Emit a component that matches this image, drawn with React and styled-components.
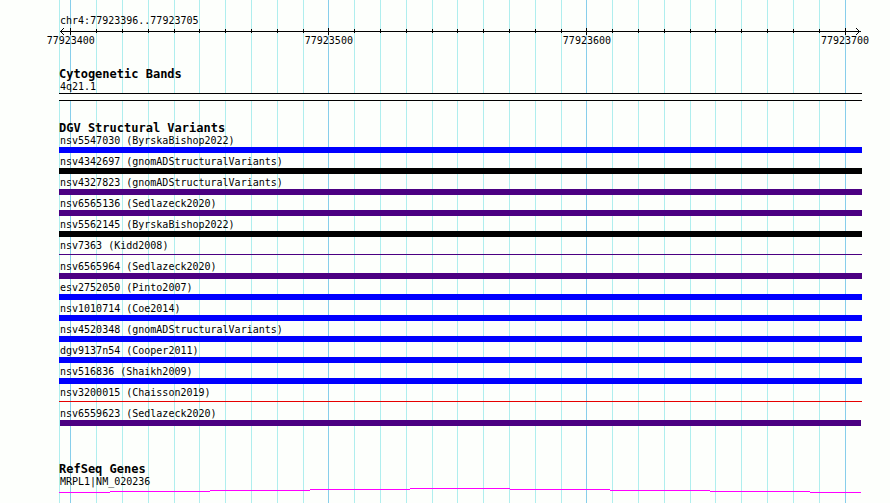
import React from "react";
import styled, { createGlobalStyle } from "styled-components";

const REGION = { chr: "chr4", start: 77923396, end: 77923705 };
// first base at the left edge and number of bases across the panel
const VIEW_START = 77923395.4363;
const VIEW_SPAN = 311.144;

const BLUE = "#0000ff";
const BLACK = "#000000";
const INDIGO = "#4b0082";
const RED = "#e60000";

const variants = [
  { id: "nsv5547030", study: "ByrskaBishop2022", color: BLUE },
  { id: "nsv4342697", study: "gnomADStructuralVariants", color: BLACK },
  { id: "nsv4327823", study: "gnomADStructuralVariants", color: INDIGO },
  { id: "nsv6565136", study: "Sedlazeck2020", color: INDIGO },
  { id: "nsv5562145", study: "ByrskaBishop2022", color: BLACK },
  { id: "nsv7363", study: "Kidd2008", color: INDIGO, thin: true },
  { id: "nsv6565964", study: "Sedlazeck2020", color: INDIGO },
  { id: "esv2752050", study: "Pinto2007", color: BLUE },
  { id: "nsv1010714", study: "Coe2014", color: BLUE },
  { id: "nsv4520348", study: "gnomADStructuralVariants", color: BLUE },
  { id: "dgv9137n54", study: "Cooper2011", color: BLUE },
  { id: "nsv516836", study: "Shaikh2009", color: BLUE },
  { id: "nsv3200015", study: "Chaisson2019", color: RED, thin: true },
  { id: "nsv6559623", study: "Sedlazeck2020", color: INDIGO, inset: true },
];

const ticks = [];
for (let pos = 77923400; pos <= REGION.end; pos += 10) {
  ticks.push({ pos, major: pos % 100 === 0 });
}

const toPercent = (pos) => `${((pos - VIEW_START) / VIEW_SPAN) * 100}%`;

const Grid = () => (
  <GridLayer aria-hidden="true">
    <line x1="0.5" x2="0.5" y1="0" y2="100%" stroke="#afeeee" />
    {ticks.map(({ pos, major }) => (
      <line
        key={pos}
        x1={toPercent(pos)}
        x2={toPercent(pos)}
        y1="0"
        y2="100%"
        stroke={major ? "#87ceeb" : "#afeeee"}
      />
    ))}
  </GridLayer>
);

const Ruler = () => (
  <RulerScale>
    <line x1="1" x2="99.8%" y1="4.5" y2="4.5" />
    <path d="M5 1.5H4M4 2.5H3M3 3.5H2M2 4.5H1M3 5.5H2M4 6.5H3M5 7.5H4" />
    <svg x="100%" overflow="visible">
      <path d="M-6 1.5H-5M-5 2.5H-4M-4 3.5H-3M-3 4.5H-1M-4 5.5H-3M-5 6.5H-4M-6 7.5H-5" />
    </svg>
    {ticks.map(({ pos, major }) => (
      <line
        key={pos}
        x1={toPercent(pos)}
        x2={toPercent(pos)}
        y1={major ? 1 : 2}
        y2={major ? 8 : 6}
      />
    ))}
    {ticks
      .filter((tick) => tick.major)
      .map(({ pos }) => (
        <text key={pos} x={toPercent(pos)} y="17">
          {pos}
        </text>
      ))}
  </RulerScale>
);

const App = () => {
  return (
    <>
      <GlobalStyle />
      <Browser>
        <Grid />
        {/* Ruler */}
        <Label>
          {REGION.chr}:{REGION.start}..{REGION.end}
        </Label>
        <Ruler />

        {/* Tracks */}
        <Track>
          <TrackTitle>Cytogenetic Bands</TrackTitle>
          <Label>4q21.1</Label>
          <Band />
        </Track>

        <Track>
          <TrackTitle>DGV Structural Variants</TrackTitle>
          <VariantList>
            {variants.map(({ id, study, color, thin, inset }) => (
              <li key={id}>
                <Label>
                  {id} ({study})
                </Label>
                <VariantBar $color={color} $thin={thin} $inset={inset} />
              </li>
            ))}
          </VariantList>
        </Track>

        <Track $last>
          <TrackTitle>RefSeq Genes</TrackTitle>
          <Label>MRPL1|NM_020236</Label>
          <Intron viewBox="0 0 803 5" preserveAspectRatio="none">
            <path d="M0 4.5H51M51 3.5H151M151 2.5H251M251 1.5H351M351 0.5H451M451 1.5H551M551 2.5H651M651 3.5H751M751 4.5H802" />
          </Intron>
        </Track>
      </Browser>
    </>
  );
};

export default App;

const GlobalStyle = createGlobalStyle`
  * {
    box-sizing: border-box;
  }

  body {
    margin: 0;
    background: #fdfffc;
    color: #000;
    font-family: "DejaVu Sans Mono", monospace;
    font-size: 10px;
  }
`;

const Browser = styled.main`
  position: relative;
  min-height: 100vh;
  margin: 0 28px 0 59px;
  padding-top: 15px;
`;

const GridLayer = styled.svg`
  position: absolute;
  inset: 0;
  z-index: -1;
  width: 100%;
  height: 100%;
  shape-rendering: crispEdges;
`;

const Label = styled.div`
  padding-left: 1px;
  line-height: 12px;
  white-space: nowrap;
`;

const RulerScale = styled.svg`
  display: block;
  width: 100%;
  height: 20px;
  margin-bottom: 21px;
  overflow: visible;
  shape-rendering: crispEdges;
  stroke: #000;
  fill: none;

  text {
    fill: #000;
    stroke: none;
    text-anchor: middle;
  }
`;

const Track = styled.section`
  margin-bottom: ${(props) => (props.$last ? "0" : "21px")};
`;

const TrackTitle = styled.h2`
  margin: 0;
  font-size: 12px;
  font-weight: bold;
  line-height: 13px;
  white-space: nowrap;
`;

const Band = styled.div`
  height: 8px;
  border: solid #000;
  border-width: 1px 0;
  background: #fdfffc;
`;

const VariantList = styled.ul`
  display: grid;
  gap: 3px;
  margin: 0;
  padding: 0 0 16px;
  list-style: none;
`;

const VariantBar = styled.div`
  height: ${(props) => (props.$thin ? "1px" : "6px")};
  margin: ${(props) => (props.$thin ? "2px 0 3px" : "0")};
  margin-inline: ${(props) => (props.$inset ? "1px" : "0")};
  background: ${(props) => props.$color};
`;

const Intron = styled.svg`
  display: block;
  width: 100%;
  height: 5px;
  shape-rendering: crispEdges;
  stroke: #ff00ff;
  fill: none;
`;
